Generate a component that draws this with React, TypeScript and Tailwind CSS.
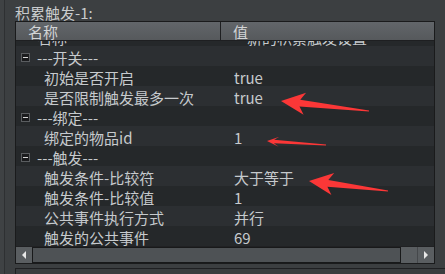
type Row = {
  name: string;
  value?: string;
  group?: boolean;
};

const rows: Row[] = [
  { name: '名称', value: '新的积累触发设置', group: true },
  { name: '---开关---', group: true },
  { name: '初始是否开启', value: 'true' },
  { name: '是否限制触发最多一次', value: 'true' },
  { name: '---绑定---', group: true },
  { name: '绑定的物品id', value: '1' },
  { name: '---触发---', group: true },
  { name: '触发条件-比较符', value: '大于等于' },
  { name: '触发条件-比较值', value: '1' },
  { name: '公共事件执行方式', value: '并行' },
  { name: '触发的公共事件', value: '69' },
];

function Expander() {
  return (
    <div className="w-[9px] h-[9px] border border-[#5a5d60] bg-[#1b1c1e] flex items-center justify-center">
      <div className="w-[5px] h-px bg-[#d6d6d6]" />
    </div>
  );
}

function Arrow({ tip, tail, head, half, body }: { tip: [number, number]; tail: [number, number]; head: number; half: number; body: number }) {
  // red annotation arrow, built from tip / tail
  const dx = tail[0] - tip[0];
  const dy = tail[1] - tip[1];
  const len = Math.hypot(dx, dy);
  const ux = dx / len;
  const uy = dy / len;
  const nx = -uy;
  const ny = ux;
  const at = (d: number, w: number) => `${tip[0] + ux * d + nx * w},${tip[1] + uy * d + ny * w}`;
  const pts = [
    at(0, 0),
    at(head + 2, -half),
    at(head - 3, -body),
    at(len, -0.6),
    at(len, 0.6),
    at(head - 3, body),
    at(head + 2, half),
  ].join(' ');
  return <polygon points={pts} fill="#fb3737" />;
}

export default function App() {
  return (
    <div className="relative w-[445px] h-[274px] overflow-hidden bg-[#3c3f41] flex font-['Noto_Sans_CJK_SC',sans-serif] text-[15px] leading-none">
      <div className="w-[7px] bg-[#3f4244] border-r border-[#2e3032]" />
      <div className="pl-[10px] flex flex-col">
        <div className="h-[22px] pt-[5px] text-[#c9cbcd] leading-[16px]">积累触发-1:</div>

        <div className="w-[420px] border border-[#1a1b1c] flex flex-col">
          {/* header */}
          <div className="h-[19px] flex bg-gradient-to-b from-[#62666a] to-[#56595c] border-b border-[#1e1f21] text-[#d2d4d6]">
            <div className="w-[205px] pl-[12px] flex items-center border-r border-[#1e1f21]">名称</div>
            <div className="flex-1 pl-[12px] flex items-center">值</div>
          </div>

          {/* rows, scrolled a bit */}
          <div className="h-[205px] overflow-hidden">
            <div className="-mt-[15px]">
              {rows.map((r, i) => (
                <div key={i} className={`h-[20px] flex items-center text-[#c6cacd] ${i % 2 === 1 ? 'bg-[#2c2f32]' : 'bg-[#25282a]'}`}>
                  <div className="w-[206px] flex items-center pt-[2px]">
                    {r.group ? (
                      <>
                        <div className="w-[21px] pl-[5px]">{i > 0 && <Expander />}</div>
                        <span>{r.name}</span>
                      </>
                    ) : (
                      <span className="pl-[28px]">{r.name}</span>
                    )}
                  </div>
                  <div className={`flex-1 pt-[2px] ${i === 0 ? 'pl-[25px]' : 'pl-[12px]'}`}>{r.value}</div>
                </div>
              ))}
            </div>
          </div>

          {/* horizontal scrollbar */}
          <div className="h-[17px] flex border-t border-[#202123] bg-[#5a5e61]">
            <div className="w-[16px] flex items-center justify-center">
              <div className="w-0 h-0 border-y-[4px] border-y-transparent border-r-[4px] border-r-[#e8e8e8]" />
            </div>
            <div className="w-[369px] border border-[#18191a] bg-[#4e5255]" />
            <div className="w-[16px]" />
            <div className="w-[17px] border-l border-[#45484b] flex items-center justify-center">
              <div className="w-0 h-0 border-y-[4px] border-y-transparent border-l-[4px] border-l-[#e8e8e8]" />
            </div>
          </div>
        </div>

        <div className="mt-[4px] w-[430px] h-[10px] border-t border-l border-[#1f2022] bg-[#3a3d3f]" />
      </div>

      <svg className="absolute inset-0 pointer-events-none" width="445" height="274">
        <Arrow tip={[281, 101]} tail={[369, 111]} head={22} half={11} body={3.5} />
        <Arrow tip={[267, 141]} tail={[326, 145]} head={10} half={5} body={1.8} />
        <Arrow tip={[309, 181]} tail={[388, 191]} head={22} half={11} body={3.5} />
      </svg>
    </div>
  );
}
